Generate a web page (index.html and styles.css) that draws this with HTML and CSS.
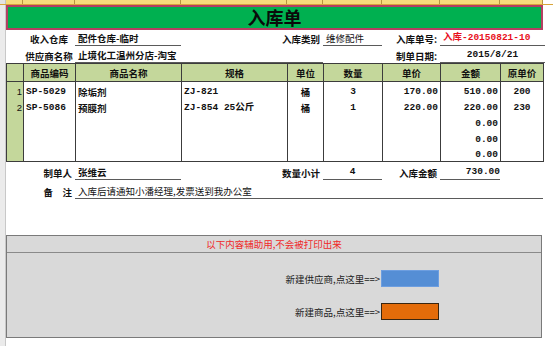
FILE: index.html
```html
<!DOCTYPE html>
<html lang="zh-CN">
<head>
<meta charset="utf-8">
<title>入库单</title>
<link rel="stylesheet" href="styles.css">
</head>
<body>
<div class="colhead">
  <span class="ch ch-corner"></span>
  <span class="ch"></span><span class="ch"></span><span class="ch"></span><span class="ch"></span>
  <span class="ch"></span><span class="ch"></span><span class="ch"></span><span class="ch"></span>
  <span class="ch"></span><span class="ch ch-rest"></span>
</div>
<div class="frame">
  <div class="rowhead"></div>
  <div class="sheet">
    <div class="title">入库单</div>

    <div class="info">
      <div class="cell lbl center r1 cb">收入仓库</div>
      <div class="cell val bold line r1 cc">配件仓库-临时</div>
      <div class="cell lbl right r1 cde">入库类别</div>
      <div class="cell val line r1 cf">维修配件</div>
      <div class="cell lbl right r1 cg">入库单号:</div>
      <div class="cell val bold line red mono r1 chi">入库-20150821-10</div>

      <div class="cell lbl center r2 cb">供应商名称</div>
      <div class="cell val bold line r2 cce">止境化工温州分店-淘宝</div>
      <div class="cell lbl right r2 cg">制单日期:</div>
      <div class="cell val bold line center mono r2 chi">2015/8/21</div>
    </div>

    <table class="items">
      <colgroup>
        <col class="w-a"><col class="w-b"><col class="w-c"><col class="w-d"><col class="w-e">
        <col class="w-f"><col class="w-g"><col class="w-h"><col class="w-i">
      </colgroup>
      <thead>
        <tr>
          <th></th><th>商品编码</th><th>商品名称</th><th>规格</th><th>单位</th>
          <th>数量</th><th>单价</th><th>金额</th><th>原单价</th>
        </tr>
      </thead>
      <tbody>
        <tr>
          <td class="idx">1</td><td class="mono">SP-5029</td><td>除垢剂</td><td class="mono">ZJ-821</td>
          <td class="center">桶</td><td class="center mono">3</td><td class="num mono">170.00</td>
          <td class="num mono">510.00</td><td class="center mono">200</td>
        </tr>
        <tr>
          <td class="idx">2</td><td class="mono">SP-5086</td><td>预膜剂</td><td class="mono">ZJ-854 25公斤</td>
          <td class="center">桶</td><td class="center mono">1</td><td class="num mono">220.00</td>
          <td class="num mono">220.00</td><td class="center mono">230</td>
        </tr>
        <tr>
          <td class="idx"></td><td></td><td></td><td></td><td></td><td></td><td></td>
          <td class="num mono">0.00</td><td></td>
        </tr>
        <tr>
          <td class="idx"></td><td></td><td></td><td></td><td></td><td></td><td></td>
          <td class="num mono">0.00</td><td></td>
        </tr>
        <tr class="last">
          <td class="idx"></td><td></td><td></td><td></td><td></td><td></td><td></td>
          <td class="num mono">0.00</td><td></td>
        </tr>
      </tbody>
    </table>

    <div class="foot">
      <div class="cell lbl right f1 cb">制单人</div>
      <div class="cell val bold line f1 cc">张维云</div>
      <div class="cell lbl right f1 cde">数量小计</div>
      <div class="cell val bold line center mono f1 cf">4</div>
      <div class="cell lbl right f1 cg">入库金额</div>
      <div class="cell val bold line right mono f1 ch1">730.00</div>

      <div class="cell lbl right f2 cb">备　注</div>
      <div class="cell val line f2 cci">入库后请通知小潘经理,发票送到我办公室</div>
    </div>

    <div class="panel">
      <div class="panel-head">以下内容辅助用,不会被打印出来</div>
      <div class="panel-body">
        <div class="plabel">新建供应商,点这里==&gt;</div>
        <div class="pbtn pbtn-blue"></div>
        <div class="plabel">新建商品,点这里==&gt;</div>
        <div class="pbtn pbtn-orange"></div>
      </div>
    </div>
  </div>
</div>
</body>
</html>
```

FILE: styles.css
```css
* { box-sizing: border-box; }

html, body {
  margin: 0;
  padding: 0;
  background: #ffffff;
  width: 553px;
  height: 346px;
  overflow: hidden;
  font-family: "Noto Sans CJK SC", "Liberation Sans", sans-serif;
  font-size: 9.5px;
  color: #111;
}

/* Excel column header strip (cut off at top) */
.colhead {
  display: grid;
  grid-template-columns: 6px 17px 52px 106px 106px 36px 59px 58px 60px 43px 1fr;
  height: 5px;
  background: #f7dc7c;
  border-bottom: 1px solid #d9a53a;
}
.ch { border-right: 1px solid #b89440; }
.ch-corner { background: #e4e4e4; border-right: 1px solid #c4c4c4; }
.ch-rest { background: #ffffff; border-right: none; }

.frame {
  display: flex;
}

.rowhead {
  width: 6px;
  height: 341px;
  background: #ebebeb;
  border-right: 1px solid #c8c8c8;
  flex: none;
}

.sheet {
  width: 537px;
  flex: none;
}

.title {
  height: 25px;
  background: #00b050;
  border: 2px solid #b43f62;
  text-align: center;
  font-size: 18px;
  font-weight: 700;
  line-height: 20px;
  color: #0a0a0a;
}

/* shared grid of columns A..I */
.info, .foot {
  display: grid;
  grid-template-columns: 17px 52px 106px 106px 36px 59px 58px 60px 43px;
}
.info { grid-template-rows: 16px 17px; }
.foot { grid-template-rows: 18px 19px; }

.cell {
  display: flex;
  align-items: flex-end;
  white-space: nowrap;
  padding-bottom: 1px;
  line-height: 12px;
}
.lbl { font-weight: 700; }
.bold { font-weight: 700; }
.center { justify-content: center; }
.right { justify-content: flex-end; padding-right: 3px; }
.val { padding-left: 3px; }
.val.center { padding-left: 0; }
.val.right { padding-left: 0; padding-right: 0; }
.line { border-bottom: 1px solid #5a5a5a; }
.red { color: #e8101c; }
.mono { font-family: "Liberation Mono", "Noto Sans CJK SC", monospace; }

.r1 { grid-row: 1; }
.r2 { grid-row: 2; }
.f1 { grid-row: 1; }
.f2 { grid-row: 2; }
.cb { grid-column: 2; }
.cc { grid-column: 3; }
.cce { grid-column: 3 / 6; }
.cci { grid-column: 3 / 10; }
.cde { grid-column: 4 / 6; }
.cf { grid-column: 6; }
.cg { grid-column: 7; }
.ch1 { grid-column: 8; }
.chi { grid-column: 8 / 10; margin-right: -2px; }

/* items table */
.items {
  width: 537px;
  table-layout: fixed;
  border-collapse: collapse;
  margin-top: 0;
}
.w-a { width: 17px; }
.w-b { width: 52px; }
.w-c { width: 106px; }
.w-d { width: 106px; }
.w-e { width: 36px; }
.w-f { width: 59px; }
.w-g { width: 58px; }
.w-h { width: 60px; }
.w-i { width: 43px; }

.items th {
  height: 18px;
  padding: 0;
  background: #c4d79b;
  border: 1px solid #3c3c3c;
  font-weight: 700;
  text-align: center;
  line-height: 12px;
}
.items td {
  height: 16px;
  padding: 0 2px 0 2px;
  border-left: 1px solid #3c3c3c;
  border-right: 1px solid #3c3c3c;
  font-weight: 700;
  line-height: 12px;
  white-space: nowrap;
  overflow: hidden;
  vertical-align: bottom;
}
.items tr.last td { border-bottom: 1px solid #3c3c3c; }
.items td.idx {
  background: #c4d79b;
  text-align: right;
  padding-right: 1px;
  font-weight: 400;
  font-family: "Liberation Sans", sans-serif;
}
.items td.center { text-align: center; }
.items td.num { text-align: right; }

/* helper panel */
.panel {
  margin-top: 36px;
  width: 536px;
  height: 103px;
  background: #d9d9d9;
  border: 1px solid #7a7a7a;
}
.panel-head {
  height: 17px;
  border-bottom: 1px solid #8a8a8a;
  text-align: center;
  color: #f02828;
  line-height: 16px;
}
.panel-body {
  display: grid;
  grid-template-columns: 374px 58px;
  grid-auto-rows: 17px;
  row-gap: 16px;
  padding-top: 17px;
  align-items: center;
}
.plabel {
  text-align: right;
  padding-right: 1px;
  color: #222;
  white-space: nowrap;
}
.pbtn { height: 17px; }
.pbtn-blue {
  background: #558ed5;
  border: 1px solid #6d9ee0;
}
.pbtn-orange {
  background: #e46c0a;
  border: 1px solid #3a2610;
}
```
